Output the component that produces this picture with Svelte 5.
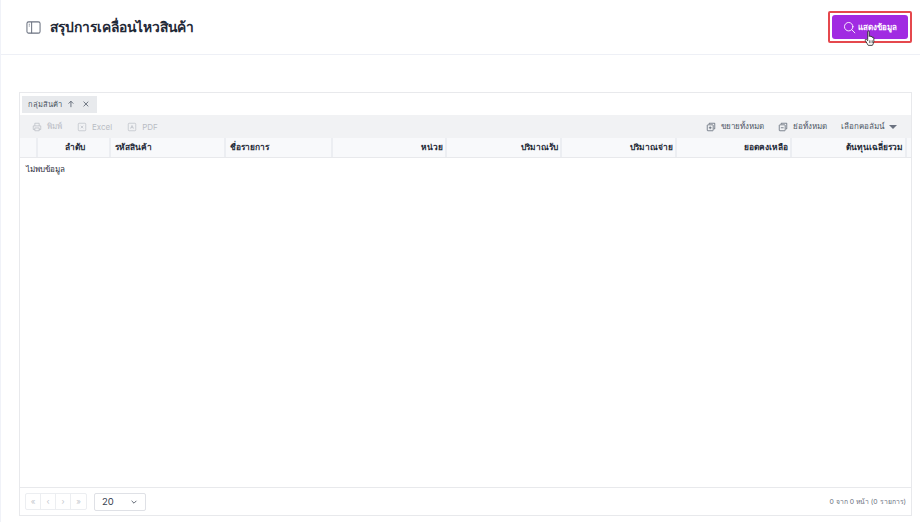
<script lang="ts">
  const columns = [
    { label: '', width: 18, align: 'left' },
    { label: 'ลำดับ', width: 73, align: 'center' },
    { label: 'รหัสสินค้า', width: 115, align: 'left' },
    { label: 'ชื่อรายการ', width: 107, align: 'left' },
    { label: 'หน่วย', width: 114, align: 'right' },
    { label: 'ปริมาณรับ', width: 115, align: 'right' },
    { label: 'ปริมาณจ่าย', width: 115, align: 'right' },
    { label: 'ยอดคงเหลือ', width: 115, align: 'right' },
    { label: 'ต้นทุนเฉลี่ยรวม', width: 115, align: 'right' },
    { label: '', width: 5, align: 'left' },
  ]
  const pagers = ['«', '‹', '›', '»']
</script>

<div class="page">
  <header class="topbar">
    <div class="title">
      <svg class="panel-icon" viewBox="0 0 16 16" fill="none" stroke="currentColor" stroke-width="1.1">
        <rect x="1" y="2" width="14" height="12" rx="1.8" />
        <path d="M6 2v12" />
        <path d="M3 4.500h1M3 6.500h1" />
      </svg>
      <h1>สรุปการเคลื่อนไหวสินค้า</h1>
    </div>
    <div class="action-ring">
      <button class="show-btn">
        <svg viewBox="0 0 16 16" fill="none" stroke="currentColor" stroke-width="1.1" stroke-linecap="round">
          <circle cx="7" cy="7" r="5.2" />
          <path d="M11 11l3.600 3.600" />
        </svg>
        แสดงข้อมูล
      </button>
      <svg class="cursor" viewBox="0 0 14 18">
        <path
          d="M4 1.600c0-.9 1.600-.9 1.600 0v5.200c.1-.9 1.600-.9 1.700 0v.6c.1-.8 1.600-.8 1.700.1v.6c.2-.7 1.600-.6 1.600.3v3.600c0 2-1 3.400-1.600 4.400H4.600C3.800 15 2.400 13 1.400 11.200c-.6-1 .6-1.900 1.400-1L4 11.400z"
          fill="#fff"
          stroke="#222"
          stroke-width=".9"
          stroke-linejoin="round"
        />
        <path d="M5.900 11v3M7.500 11v3M9.100 11v3" stroke="#222" stroke-width=".6" />
      </svg>
    </div>
  </header>

  <main class="content">
    <section class="grid-card">
      <div class="group-bar">
        <span class="chip">
          <span class="chip-label">กลุ่มสินค้า</span>
          <svg viewBox="0 0 10 10" fill="none" stroke="currentColor" stroke-width="1">
            <path d="M5 9V1.500M2 4.500 5 1.500l3 3" />
          </svg>
          <svg viewBox="0 0 10 10" fill="none" stroke="currentColor" stroke-width="1">
            <path d="M2 2l6 6M8 2 2 8" />
          </svg>
        </span>
      </div>

      <div class="toolbar">
        <div class="tools muted">
          <span class="tool">
            <svg viewBox="0 0 16 16" fill="none" stroke="currentColor" stroke-width="1.2">
              <path d="M4.500 6V2h7v4M4.500 12H2V6.200h12V12h-2.500M4.500 9.500h7V14h-7z" />
            </svg>
            พิมพ์
          </span>
          <span class="tool">
            <svg viewBox="0 0 16 16" fill="none" stroke="currentColor" stroke-width="1.1">
              <rect x="2" y="2" width="12" height="12" rx="1.500" />
              <path d="M6 6l4 4M10 6l-4 4" />
            </svg>
            Excel
          </span>
          <span class="tool">
            <svg viewBox="0 0 16 16" fill="none" stroke="currentColor" stroke-width="1.1">
              <rect x="2" y="2" width="12" height="12" rx="1.500" />
              <path d="M5.500 10.500 8 5.500l2.500 5M6.500 9h3" />
            </svg>
            PDF
          </span>
        </div>
        <div class="tools">
          <span class="tool">
            <svg viewBox="0 0 16 16" fill="none" stroke="currentColor" stroke-width="1.1">
              <path d="M5 3.500V2h9v9h-1.500" />
              <rect x="2" y="4.500" width="9.500" height="9.500" rx="1" />
              <path d="M6.700 7v4.500M4.500 9.200H9" />
            </svg>
            ขยายทั้งหมด
          </span>
          <span class="tool">
            <svg viewBox="0 0 16 16" fill="none" stroke="currentColor" stroke-width="1.1">
              <path d="M5 3.500V2h9v9h-1.500" />
              <rect x="2" y="4.500" width="9.500" height="9.500" rx="1" />
              <path d="M4.500 9.200H9" />
            </svg>
            ย่อทั้งหมด
          </span>
          <span class="tool columns-menu">
            เลือกคอลัมน์
            <i class="caret"></i>
          </span>
        </div>
      </div>

      <div class="head-row">
        {#each columns as col}
          <div class="head-cell {col.align}" style:width="{col.width}px">{col.label}</div>
        {/each}
      </div>

      <div class="grid-body">
        <p>ไม่พบข้อมูล</p>
      </div>

      <footer class="pager-row">
        <div class="pager-left">
          <div class="pager">
            {#each pagers as p}
              <span>{p}</span>
            {/each}
          </div>
          <div class="size-select">
            20
            <svg viewBox="0 0 10 10" fill="none" stroke="currentColor" stroke-width="1">
              <path d="M2 3.500 5 6.500l3-3" />
            </svg>
          </div>
        </div>
        <span class="summary">0 จาก 0 หน้า (0 รายการ)</span>
      </footer>
    </section>
  </main>
</div>

<style>
  :global(body) {
    margin: 0;
    background: #fff;
  }

  .page {
    height: 522px;
    display: flex;
    flex-direction: column;
    border-left: 1px solid #f0f2f8;
    box-sizing: border-box;
    font-family: Inter, 'Noto Sans', 'Liberation Sans', sans-serif;
    color: #374151;
    overflow: hidden;
  }

  .topbar {
    height: 55px;
    flex: none;
    box-sizing: border-box;
    border-bottom: 1px solid #eef0f6;
    display: flex;
    align-items: center;
    justify-content: space-between;
    padding: 0 8px 0 25px;
  }

  .title {
    display: flex;
    align-items: center;
    gap: 9px;
  }

  .panel-icon {
    width: 15px;
    height: 15px;
    color: #6b7280;
  }

  h1 {
    margin: 0;
    font-size: 13.800px;
    font-weight: 600;
    color: #1f2937;
  }

  .action-ring {
    position: relative;
    width: 84px;
    height: 32px;
    box-sizing: border-box;
    border: 2px solid #e5484d;
    border-radius: 2px;
    padding: 2px;
  }

  .show-btn {
    width: 100%;
    height: 100%;
    border: none;
    border-radius: 3px;
    background: #a12be2;
    color: #fff;
    font: 600 8px Inter, 'Noto Sans', 'Liberation Sans', sans-serif;
    display: flex;
    align-items: center;
    justify-content: center;
    gap: 2px;
    padding: 0;
  }

  .show-btn svg {
    width: 13px;
    height: 13px;
  }

  .cursor {
    position: absolute;
    left: 34px;
    top: 17px;
    width: 13px;
    height: 17px;
  }

  .content {
    flex: 1;
    min-height: 0;
    padding: 37px 8px 6px 18px;
  }

  .grid-card {
    height: 100%;
    box-sizing: border-box;
    border: 1px solid #e8e9ec;
    display: flex;
    flex-direction: column;
  }

  .group-bar {
    height: 22px;
    flex: none;
    display: flex;
    align-items: center;
    padding: 0 3px 0 2px;
    box-sizing: border-box;
  }

  .chip {
    height: 17px;
    width: 75px;
    box-sizing: border-box;
    background: #e8eaed;
    font-size: 7.500px;
    color: #4b5563;
    display: flex;
    align-items: center;
    padding-left: 6px;
  }

  .chip-label {
    width: 40px;
  }

  .chip svg {
    width: 8px;
    height: 8px;
    margin-right: 7px;
  }

  .toolbar {
    height: 23px;
    flex: none;
    background: #f1f2f4;
    display: flex;
    align-items: center;
    justify-content: space-between;
    padding: 0 14px 0 12px;
    font-size: 8px;
    color: #4b5563;
  }

  .tools {
    display: flex;
    align-items: center;
    gap: 14px;
  }

  .tools.muted {
    gap: 15px;
    color: #b9bdc4;
  }

  .tool {
    display: flex;
    align-items: center;
    gap: 5px;
  }

  .tool svg {
    width: 10px;
    height: 10px;
  }

  .caret {
    width: 0;
    height: 0;
    margin-left: 0;
    border-left: 4px solid transparent;
    border-right: 4px solid transparent;
    border-top: 4px solid #6b7280;
  }

  .head-row {
    height: 20px;
    flex: none;
    box-sizing: border-box;
    display: flex;
    background: #f8f9fb;
    border-bottom: 1px solid #e8e9ec;
    overflow: hidden;
  }

  .head-cell {
    flex: none;
    box-sizing: border-box;
    border-right: 2px solid #eceef2;
    padding: 0 2px 0 4px;
    font-size: 8.400px;
    font-weight: 700;
    line-height: 19px;
    color: #1f2937;
    white-space: nowrap;
  }

  .head-cell.right {
    text-align: right;
  }

  .head-cell.center {
    text-align: center;
  }

  .grid-body {
    flex: 1;
    min-height: 0;
  }

  .grid-body p {
    margin: 5px 0 0 6px;
    font-size: 8px;
    color: #1f2937;
  }

  .pager-row {
    height: 28px;
    flex: none;
    box-sizing: border-box;
    border-top: 1px solid #e8e9ec;
    display: flex;
    align-items: center;
    justify-content: space-between;
    padding: 0 5px;
  }

  .pager-left {
    display: flex;
    align-items: center;
    gap: 7px;
  }

  .pager {
    display: flex;
    border: 1px solid #eceef1;
    border-radius: 2px;
  }

  .pager span {
    width: 15px;
    height: 15px;
    box-sizing: border-box;
    font-size: 8px;
    line-height: 14px;
    text-align: center;
    color: #c4c7cd;
    border-right: 1px solid #eceef1;
  }

  .pager span:last-child {
    border-right: none;
  }

  .size-select {
    width: 52px;
    height: 18px;
    box-sizing: border-box;
    border: 1px solid #dfe1e6;
    border-radius: 2px;
    display: flex;
    align-items: center;
    justify-content: space-between;
    padding: 0 7px 0 7px;
    font-size: 9.500px;
    color: #374151;
  }

  .size-select svg {
    width: 8px;
    height: 8px;
  }

  .summary {
    font-size: 6.800px;
    color: #6b7280;
  }
</style>
